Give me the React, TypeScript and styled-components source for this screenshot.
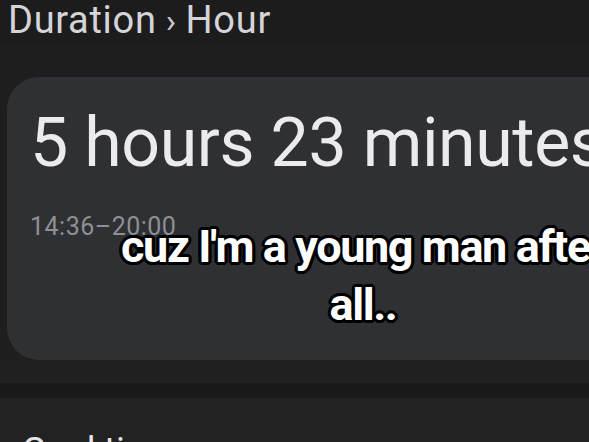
import React from "react";
import styled, { createGlobalStyle } from "styled-components";

const GlobalStyle = createGlobalStyle`
  html, body {
    margin: 0;
    padding: 0;
    background: #1c1c1d;
  }
  body {
    font-family: Roboto, "Noto Sans", "Liberation Sans", sans-serif;
  }
`;

const Page = styled.div`
  position: relative;
  width: 589px;
  height: 442px;
  overflow: hidden;
  background: #1c1c1d;
  display: flex;
  flex-direction: column;
`;

const Breadcrumb = styled.div`
  margin: -2px 0 0 8px;
  height: 44px;
  font-size: 38px;
  line-height: 44px;
  color: #d4d4d9;
  white-space: nowrap;
  letter-spacing: 0.7px;
`;

const Chevron = styled.span`
  font-size: 34px;
  margin: 0 9px;
  color: #c8c8cd;
`;

const CardWrap = styled.div`
  padding: 35px 0 0 7px;
  background: #1e1e1f;
`;

const Card = styled.section`
  width: 660px;
  height: 283px;
  box-sizing: border-box;
  padding: 32px 0 0 23px;
  border-radius: 32px;
  background: #2f3034;
  display: flex;
  flex-direction: column;
`;

const Duration = styled.div`
  font-size: 68px;
  line-height: 68px;
  color: #ebebef;
  white-space: nowrap;
  letter-spacing: -0.4px;
`;

const TimeRange = styled.div`
  margin-top: 37px;
  font-size: 25px;
  line-height: 25px;
  letter-spacing: 0.5px;
  color: #8e8f94;
  white-space: nowrap;
`;

const Band = styled.div<{ $h: number; $bg: string }>`
  height: ${(p) => p.$h}px;
  background: ${(p) => p.$bg};
  flex-shrink: 0;
`;

const Section = styled.div`
  flex: 1;
  background: #222223;
  padding: 31px 0 0 22px;
`;

const SectionTitle = styled.div`
  font-size: 36px;
  line-height: 44px;
  color: #e6e6ea;
  white-space: nowrap;
`;

const Caption = styled.div`
  position: absolute;
  left: 63px;
  top: 218px;
  width: 600px;
  text-align: center;
  font-family: Roboto, "Liberation Sans", sans-serif;
  font-weight: 700;
  font-size: 45px;
  line-height: 58px;
  letter-spacing: -1.4px;
  color: #ffffff;
  white-space: pre-line;
  text-shadow:
    -2px -2px 0 #000, 2px -2px 0 #000, -2px 2px 0 #000, 2px 2px 0 #000,
    0 -3px 0 #000, 0 3px 0 #000, -3px 0 0 #000, 3px 0 0 #000,
    -3px -1px 0 #000, 3px 1px 0 #000, -1px 3px 0 #000, 1px -3px 0 #000,
    -3px 1px 0 #000, 3px -1px 0 #000, 1px 3px 0 #000, -1px -3px 0 #000;
`;

export default function App() {
  return (
    <>
      <GlobalStyle />
      <Page>
        <Breadcrumb>
          Duration<Chevron>›</Chevron>Hour
        </Breadcrumb>
        <CardWrap>
          <Card>
            <Duration>5 hours 23 minutes</Duration>
            <TimeRange>14:36–20:00</TimeRange>
          </Card>
        </CardWrap>
        <Band $h={23} $bg="#202021" />
        <Band $h={15} $bg="#19191a" />
        <Section>
          <SectionTitle>Goal time</SectionTitle>
        </Section>
        <Caption>{"cuz I'm a young man after\nall.."}</Caption>
      </Page>
    </>
  );
}
